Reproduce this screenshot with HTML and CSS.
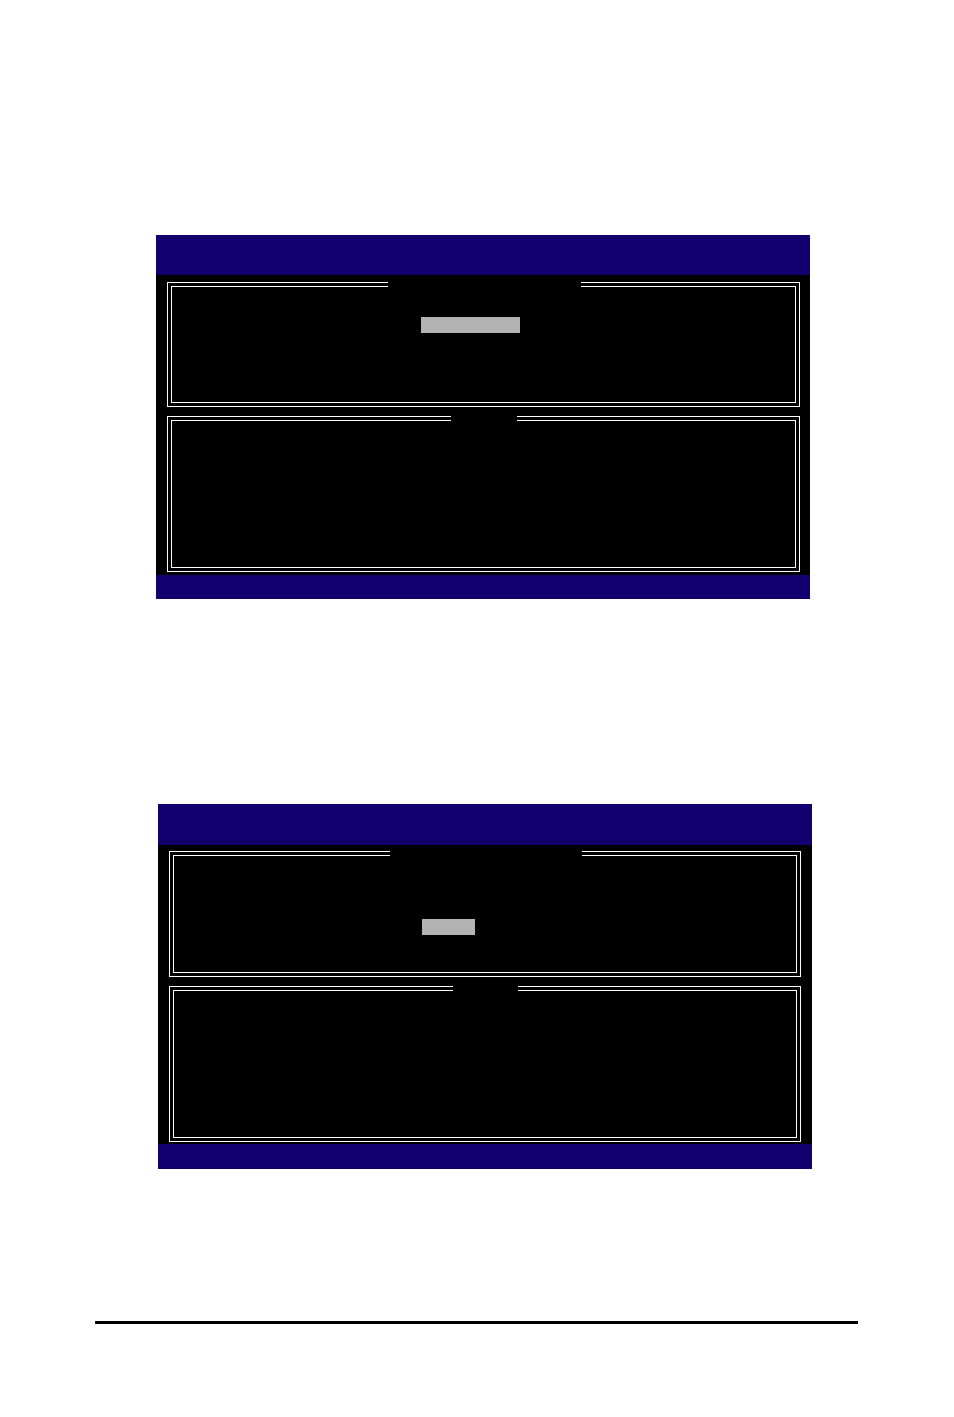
FILE: index.html
```html
<!DOCTYPE html>
<html lang="en">
<head>
    <meta charset="UTF-8">
    <meta name="viewport" content="width=device-width, initial-scale=1.0">
    <link rel="stylesheet" href="styles.css">
</head>
<body>
    <main class="page">
        <section class="screen">
            <div class="screen-header"></div>
            <div class="screen-body">
                <div class="frame">
                    <div class="frame-inner menu">
                        <div class="frame-title wide"></div>
                        <ul class="menu-list">
                            <li class="selected long"></li>
                            <li></li>
                            <li></li>
                            <li></li>
                        </ul>
                    </div>
                </div>
                <div class="frame">
                    <div class="frame-inner help">
                        <div class="frame-title"></div>
                    </div>
                </div>
            </div>
            <div class="screen-footer"></div>
        </section>

        <section class="screen second">
            <div class="screen-header"></div>
            <div class="screen-body">
                <div class="frame">
                    <div class="frame-inner menu">
                        <div class="frame-title wide"></div>
                        <ul class="menu-list">
                            <li></li>
                            <li></li>
                            <li class="selected"></li>
                            <li></li>
                        </ul>
                    </div>
                </div>
                <div class="frame">
                    <div class="frame-inner help">
                        <div class="frame-title"></div>
                    </div>
                </div>
            </div>
            <div class="screen-footer"></div>
        </section>
    </main>
    <hr class="page-rule">
</body>
</html>
```

FILE: styles.css
```css
* {
    box-sizing: border-box;
}

body {
    margin: 0;
    background-color: #ffffff;
    font-family: "Liberation Mono", monospace;
}

.page {
    padding: 235px 144px 152px 156px;
}

.screen {
    background-color: #000000;
}

.screen-header {
    height: 40px;
    background-color: #11006e;
}

.screen-footer {
    height: 24px;
    background-color: #11006e;
}

.screen-body {
    display: flex;
    flex-direction: column;
    gap: 9px;
    padding: 7px 10px 3px 11px;
}

/* double line frame */
.frame {
    border: 1px solid #ffffff;
    padding: 3px;
}

.frame-inner {
    border: 1px solid #ffffff;
}

.frame-inner.menu {
    min-height: 117px;
    padding-left: 2px;
}

.frame-inner.help {
    min-height: 148px;
}

/* covers both lines where the title goes */
.frame-title {
    width: 66px;
    height: 5px;
    margin: -5px auto 0;
    background-color: #000000;
}

.frame-title.wide {
    width: 193px;
}

.menu-list {
    display: flex;
    flex-direction: column;
    gap: 1px;
    margin: 0;
    padding: 30px 0 0 calc(50% - 64px);
    list-style: none;
}

.menu-list li {
    height: 16px;
}

.menu-list .selected {
    width: 53px;
    background-color: #b3b3b3;
}

.menu-list .selected.long {
    width: 99px;
}

/* second screen */
.second {
    margin: 205px -2px 0 2px;
}

.second .screen-header {
    height: 41px;
}

.second .screen-footer {
    height: 25px;
}

.second .screen-body {
    padding: 6px 11px 2px 11px;
}

.second .frame-inner.menu {
    min-height: 118px;
}

.second .frame-title {
    width: 65px;
}

.second .frame-title.wide {
    width: 192px;
}

.second .menu-list {
    padding-top: 29px;
}

.page-rule {
    height: 3px;
    margin: 0 96px 93px 95px;
    border: none;
    background-color: #000000;
}
```
